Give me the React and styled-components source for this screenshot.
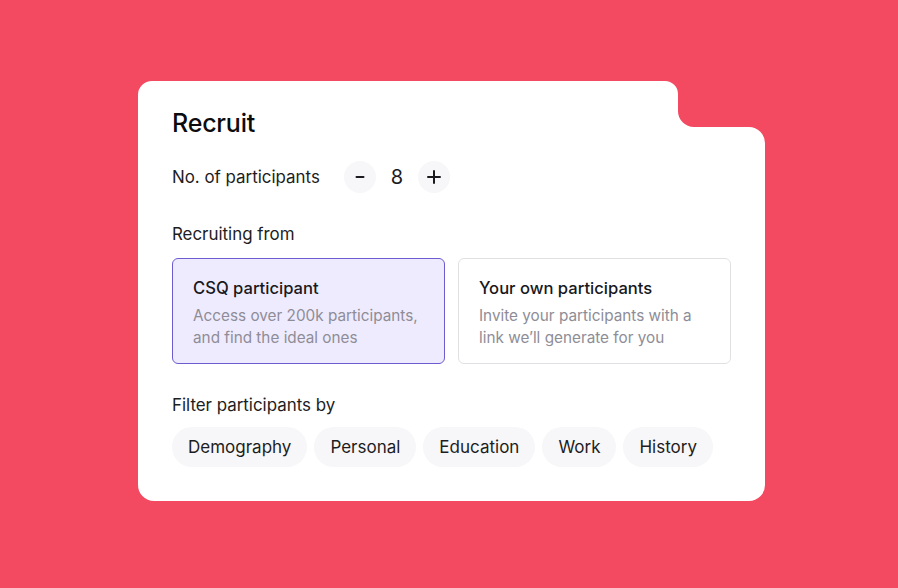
import React, { useState } from 'react'
import styled, { createGlobalStyle } from 'styled-components'

const GlobalStyle = createGlobalStyle`
  html, body {
    margin: 0;
    padding: 0;
    background: #f34a62;
  }
  body {
    font-family: Inter, "Noto Sans", sans-serif;
    color: #18181b;
    -webkit-font-smoothing: antialiased;
  }
`

const Page = styled.div`
  width: 898px;
  height: 588px;
  box-sizing: border-box;
  padding: 81px 0 0 138px;
  background: #f34a62;
`

// white panel with the stepped cut-out in its top right corner
const Card = styled.div`
  width: 627px;
  height: 420px;
  box-sizing: border-box;
  background: #fff;
  padding: 26px 34px 0 34px;
  clip-path: path('M14,0 H527 A13 13 0 0 1 540 13 V30 A16 16 0 0 0 556 46 H611 A16 16 0 0 1 627 62 V404 A16 16 0 0 1 611 420 H16 A16 16 0 0 1 0 404 V14 A14 14 0 0 1 14 0 Z');
`

const Title = styled.h1`
  margin: 0;
  font-size: 25px;
  font-weight: 500;
  letter-spacing: -0.2px;
  line-height: 32px;
  color: #0c0c0f;
`

const Row = styled.div`
  display: flex;
  align-items: center;
  margin-top: ${p => p.$top || 0}px;
`

const Label = styled.div`
  font-size: 16.9px;
  line-height: 22px;
  color: #1d1d22;
  margin-top: ${p => p.$top || 0}px;
`

const Stepper = styled.div`
  display: flex;
  align-items: center;
  margin-left: 24px;
`

const StepButton = styled.button`
  width: 32px;
  height: 32px;
  border: none;
  border-radius: 50%;
  background: #f7f6f8;
  display: flex;
  align-items: center;
  justify-content: center;
  padding: 0;
  color: #1b1b1f;
  cursor: pointer;
`

const Count = styled.span`
  width: 42px;
  text-align: center;
  font-size: 20px;
  color: #1b1b1f;
`

const Options = styled.div`
  display: grid;
  grid-template-columns: 273px 273px;
  gap: 13px;
  margin-top: 13px;
`

const Option = styled.div`
  height: 106px;
  box-sizing: border-box;
  border-radius: 6px;
  padding: 18px 20px;
  border: 1px solid ${p => (p.$active ? '#6b5ccf' : '#e1e1e5')};
  background: ${p => (p.$active ? '#efebfe' : '#fff')};
  cursor: pointer;
`

const OptionTitle = styled.div`
  font-size: 16.6px;
  font-weight: 500;
  line-height: 22px;
  color: #18181c;
`

const OptionText = styled.div`
  margin-top: 6px;
  font-size: 15.3px;
  line-height: 22px;
  color: #8e8d97;
`

const Chips = styled.div`
  display: flex;
  gap: 7px;
  margin-top: 11px;
`

const Chip = styled.button`
  height: 40px;
  border: none;
  border-radius: 20px;
  background: #f7f6f8;
  padding: 0 16px;
  font-family: inherit;
  font-size: 17px;
  color: #1d1d22;
  cursor: pointer;
`

const Minus = () => (
  <svg width="14" height="14" viewBox="0 0 14 14">
    <path d="M3.5 7h7" stroke="currentColor" strokeWidth="2" strokeLinecap="round" />
  </svg>
)

const Plus = () => (
  <svg width="16" height="16" viewBox="0 0 16 16">
    <path d="M8 2v12M2 8h12" stroke="currentColor" strokeWidth="2" strokeLinecap="round" />
  </svg>
)

const filters = ['Demography', 'Personal', 'Education', 'Work', 'History']

export default function App() {
  const [count, setCount] = useState(8)
  const [source, setSource] = useState('csq')

  return (
    <>
      <GlobalStyle />
      <Page>
        <Card>
          <Title>Recruit</Title>
          <Row $top={22}>
            <Label>No. of participants</Label>
            <Stepper>
              <StepButton onClick={() => setCount(Math.max(1, count - 1))}>
                <Minus />
              </StepButton>
              <Count>{count}</Count>
              <StepButton onClick={() => setCount(count + 1)}>
                <Plus />
              </StepButton>
            </Stepper>
          </Row>

          <Label $top={30}>Recruiting from</Label>
          <Options>
            <Option $active={source === 'csq'} onClick={() => setSource('csq')}>
              <OptionTitle>CSQ participant</OptionTitle>
              <OptionText>Access over 200k participants, and find the ideal ones</OptionText>
            </Option>
            <Option $active={source === 'own'} onClick={() => setSource('own')}>
              <OptionTitle>Your own participants</OptionTitle>
              <OptionText>Invite your participants with a link we’ll generate for you</OptionText>
            </Option>
          </Options>

          <Label $top={30}>Filter participants by</Label>
          <Chips>
            {filters.map(f => (
              <Chip key={f}>{f}</Chip>
            ))}
          </Chips>
        </Card>
      </Page>
    </>
  )
}
